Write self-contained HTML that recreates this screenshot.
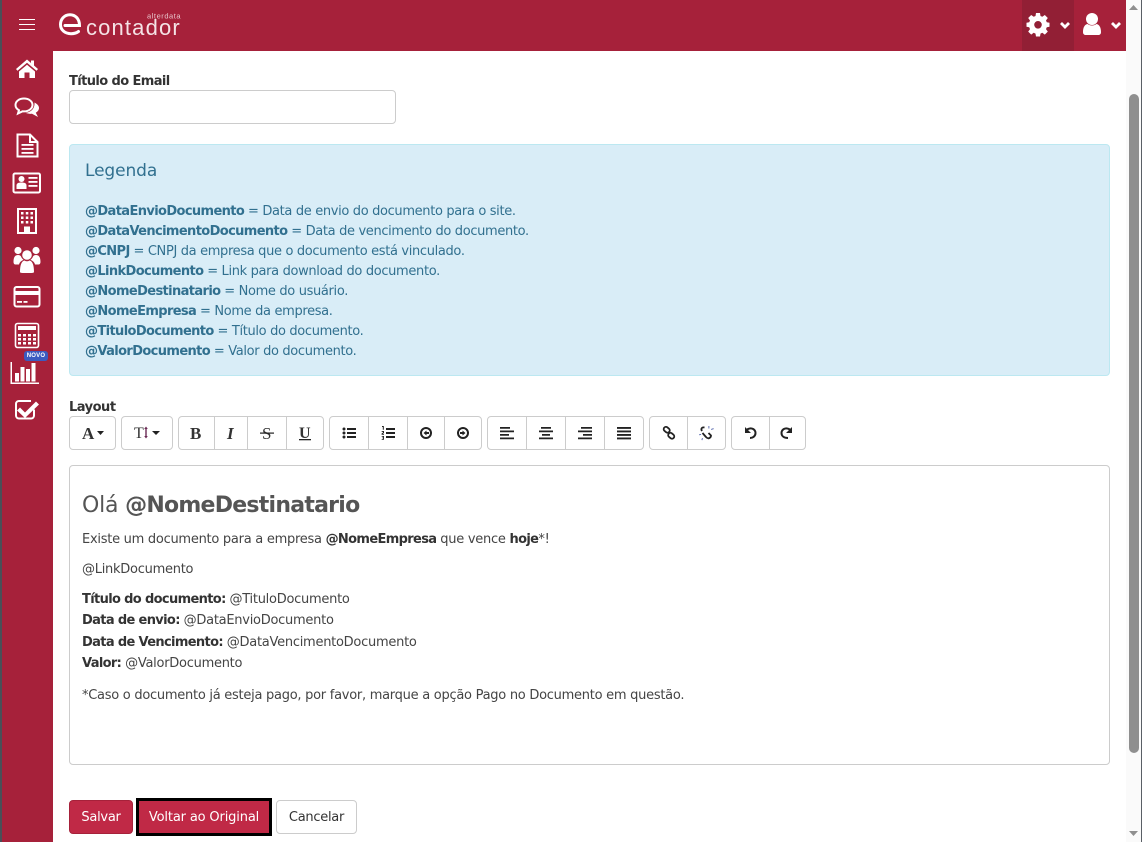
<!DOCTYPE html>
<html lang="pt-BR"><head><meta charset="utf-8"><title>Contador</title>
<style>
html,body{margin:0;padding:0;width:1142px;height:842px;overflow:hidden;background:#fff}
body{position:relative;font-family:"DejaVu Sans","Liberation Sans",sans-serif;font-size:13px;color:#333;letter-spacing:-.27px}
.a{position:absolute;white-space:nowrap}
.box{position:absolute;box-sizing:border-box}
.l{position:absolute;left:85px;white-space:nowrap;color:#31708f;line-height:20px;font-size:13px;letter-spacing:-.34px}
.e{position:absolute;left:82px;white-space:nowrap;color:#444;line-height:20px;font-size:13px;letter-spacing:-.265px}
.e b{color:#333;letter-spacing:-.65px}
b{font-weight:700;letter-spacing:-.62px}
.g{position:absolute;top:416px;height:34px;box-sizing:border-box;border:1px solid #ccc;border-radius:4px;background:#fff}
.d{position:absolute;top:416px;width:1px;height:34px;background:#ccc}
svg{position:absolute;overflow:visible}
.t{position:absolute;font-family:"Liberation Serif",serif;color:#333;white-space:nowrap;letter-spacing:0}
</style></head><body>

<div class="box" style="left:0;top:0;width:1126px;height:51px;background:#a6213a"></div>
<div class="box" style="left:0;top:51px;width:53px;height:791px;background:#a6213a"></div>
<div class="box" style="left:0;top:0;width:2px;height:842px;background:#4a4f57"></div>
<div class="box" style="left:1022px;top:0;width:52px;height:51px;background:#921f35"></div>

<!-- hamburger -->
<div class="box" style="left:19px;top:19px;width:16px;height:1px;background:#fff"></div>
<div class="box" style="left:19px;top:24px;width:16px;height:1px;background:#fff"></div>
<div class="box" style="left:19px;top:29px;width:16px;height:1px;background:#fff"></div>

<!-- logo -->
<svg style="left:0;top:0" width="200" height="51">
<path d="M65 25.500H79.500C79.500 18.500 75 14.700 70 14.700C64 14.700 60.500 19.500 60.500 24.500C60.500 30 65 33.700 71 33.700C74 33.700 76.500 33 78.500 31.500" fill="none" stroke="#fff" stroke-width="3" stroke-linecap="round"/>
<text x="86" y="35" font-family="Liberation Sans,sans-serif" font-size="22" fill="#f5e3e6" letter-spacing="1.150">contador</text>
<text x="147" y="18.500" font-family="Liberation Sans,sans-serif" font-size="7.500" fill="#e8c3ca" letter-spacing=".55">alterdata</text>
</svg>

<!-- sidebar icons -->
<svg style="left:0;top:0" width="53" height="430" fill="#fff">
<!-- home -->
<path d="M27 59.500L16 69L17.500 70.800L27 62.700L36.500 70.800L38 69L34 65.500V60.500H31V63L27 59.500Z"/>
<path d="M19 71.500L27 64.700L35 71.500V78H29.500V72.500H24.500V78H19Z"/>
<!-- comments -->
<path d="M24 98.500C19.200 98.500 15.500 101.300 15.500 105C15.500 107.200 16.800 109 19 110.200L18 113.500L22.500 111.300C23 111.400 23.500 111.400 24 111.400C28.800 111.400 32.500 108.500 32.500 105C32.500 101.300 28.800 98.500 24 98.500Z" fill="none" stroke="#fff" stroke-width="2"/>
<path d="M34.500 102.500C37.500 104 39 106 39 108C39 110 37.600 111.700 35.800 112.700L38 117L32 113.800C29.500 114 27.500 113.600 25.500 112.800C30 112.500 35 109.500 34.500 102.500Z"/>
<!-- doc -->
<g fill="none" stroke="#fff" stroke-width="2"><path d="M17.500 134.500H30L37.500 142V156.500H17.500Z"/><path d="M30 134.500V142H37.500"/></g>
<rect x="21.500" y="144" width="12" height="1.800"/><rect x="21.500" y="148" width="12" height="1.800"/><rect x="21.500" y="152" width="12" height="1.800"/>
<!-- id card -->
<rect x="13.500" y="173.500" width="26.500" height="19" rx="1.500" fill="none" stroke="#fff" stroke-width="2"/>
<circle cx="21.500" cy="179" r="3"/><path d="M16.500 189V185.500C16.500 183.500 18 182.500 21.500 182.500S26.500 183.500 26.500 185.500V189Z"/>
<rect x="28.500" y="177" width="9" height="1.800"/><rect x="28.500" y="181" width="9" height="1.800"/><rect x="28.500" y="185" width="9" height="1.800"/>
<!-- building -->
<rect x="18" y="209" width="18" height="24" fill="none" stroke="#fff" stroke-width="2"/>
<path d="M21 212h2.500v2.500h-2.500zM25.800 212h2.500v2.500h-2.500zM30.500 212h2.500v2.500h-2.500zM21 216.500h2.500v2.500h-2.500zM25.800 216.500h2.500v2.500h-2.500zM30.500 216.500h2.500v2.500h-2.500zM21 221h2.500v2.500h-2.500zM25.800 221h2.500v2.500h-2.500zM30.500 221h2.500v2.500h-2.500zM24 226.500h6V232h-6z"/>
<!-- users -->
<circle cx="18" cy="250.500" r="3.600"/><circle cx="36" cy="250.500" r="3.600"/><circle cx="27" cy="255" r="4.800"/>
<path d="M13.500 262C13.500 256.500 15.500 255 18 255C19.500 255 20.500 255.500 21 256.500C21.500 258 22.500 259 23.500 259.800C21 261 19.500 262.500 19 264.500H15.500C14.300 264.500 13.500 263.500 13.500 262Z"/>
<path d="M40.500 262C40.500 256.500 38.500 255 36 255C34.500 255 33.500 255.500 33 256.500C32.500 258 31.500 259 30.500 259.800C33 261 34.500 262.500 35 264.500H38.500C39.700 264.500 40.500 263.500 40.500 262Z"/>
<path d="M20 272C20 264 22 261 24.500 260.500C26 261.500 28 261.500 29.500 260.500C32 261 34 264 34 272C34 272.500 33 273 31.500 273H22.500C21 273 20 272.500 20 272Z"/>
<!-- card -->
<rect x="14.500" y="287" width="25" height="19.500" rx="2" fill="none" stroke="#fff" stroke-width="2"/>
<rect x="15" y="291" width="24" height="4"/><rect x="17" y="301" width="5" height="1.800"/><rect x="23.500" y="301" width="4" height="1.800"/>
<!-- calculator -->
<rect x="15.500" y="323.500" width="23" height="24" rx="2" fill="none" stroke="#fff" stroke-width="1.600"/>
<rect x="18" y="326" width="18" height="4"/>
<path d="M18 334h3v2.500h-3zM23 334h3v2.500h-3zM28 334h3v2.500h-3zM33 334h3v2.500h-3zM18 338h3v2.500h-3zM23 338h3v2.500h-3zM28 338h3v2.500h-3zM33 338h3v2.500h-3zM18 342h3v2.500h-3zM23 342h3v2.500h-3zM28 342h3v2.500h-3zM33 342h3v2.500h-3z"/>
<!-- chart -->
<path d="M10.500 362h1.500v20.500H39V384H10.500Z"/>
<rect x="15" y="373" width="4" height="8.500"/><rect x="20.500" y="367" width="4" height="14.500"/><rect x="26" y="369" width="4" height="12.500"/><rect x="31.500" y="363" width="4" height="18.500"/>
<!-- check -->
<path d="M34 409.500V415.500C34 417.500 32.500 418.500 31 418.500H19C17.500 418.500 16 417.500 16 415.500V404C16 402 17.500 401 19 401H31" fill="none" stroke="#fff" stroke-width="2"/>
<path d="M20 407.500L25 412.500L36 401.500L39 404.500L25 418L17 410.500Z"/>
</svg>
<div class="box" style="left:24px;top:351px;width:24px;height:10px;background:#3b5bc0;border-radius:3px"></div>
<div class="a" style="left:24px;top:351px;width:24px;text-align:center;color:#fff;font:700 6px/10px 'Liberation Sans',sans-serif;letter-spacing:.2px">NOVO</div>

<!-- header right icons -->
<svg style="left:0;top:0" width="1126" height="51" fill="#fff">
<path fill-rule="evenodd" d="M1036 13H1040L1040.500 16L1042.300 16.800L1044.800 15L1047.800 18L1046 20.500L1046.800 22.300L1049.500 22.800V26.800L1046.800 27.300L1046 29.100L1047.800 31.600L1044.800 34.600L1042.300 32.800L1040.500 33.600L1040 36.500H1036L1035.500 33.600L1033.700 32.800L1031.200 34.600L1028.200 31.600L1030 29.100L1029.200 27.300L1026.500 26.800V22.800L1029.200 22.300L1030 20.500L1028.200 18L1031.200 15L1033.700 16.800L1035.500 16ZM1038 21A3.800 3.800 0 1 0 1038 28.600A3.800 3.800 0 1 0 1038 21Z"/>
<path d="M1061 23L1065 27L1069 23" fill="none" stroke="#fff" stroke-width="2.800"/>
<circle cx="1092" cy="19" r="6"/>
<path d="M1083 32C1083 27 1085 24.500 1087.500 24C1090 26 1094 26 1096.500 24C1099 24.500 1101 27 1101 32C1101 34 1100 35 1098 35H1086C1084 35 1083 34 1083 32Z"/>
<path d="M1112 23L1116 27L1120 23" fill="none" stroke="#fff" stroke-width="2.800"/>
</svg>

<!-- scrollbar -->
<div class="box" style="left:1126px;top:0;width:15px;height:842px;background:#fafafa"></div>
<div class="box" style="left:1141px;top:0;width:1px;height:842px;background:#5a5f66"></div>
<div class="box" style="left:1129px;top:94px;width:10px;height:659px;background:#8f8f8f;border-radius:5px"></div>
<svg style="left:0;top:0" width="1142" height="842" fill="#8f8f8f"><path d="M1133.500 5L1138 10H1129ZM1129 831H1138L1133.500 836Z"/></svg>

<!-- form -->
<div class="a" style="left:69px;top:72px;line-height:20px;font-weight:700;font-size:13px;color:#333;letter-spacing:-.6px">Título do Email</div>
<div class="box" style="left:69px;top:90px;width:327px;height:34px;border:1px solid #ccc;border-radius:4px;background:#fff"></div>

<div class="box" style="left:69px;top:144px;width:1041px;height:232px;background:#d9edf7;border:1px solid #bce8f1;border-radius:4px"></div>
<div class="a" style="left:85px;top:160px;font-size:17px;line-height:22px;color:#31708f;letter-spacing:-.1px">Legenda</div>
<div class="l" style="top:202px"><b>@DataEnvioDocumento</b> = Data de envio do documento para o site.</div>
<div class="l" style="top:222px"><b>@DataVencimentoDocumento</b> = Data de vencimento do documento.</div>
<div class="l" style="top:242px"><b>@CNPJ</b> = CNPJ da empresa que o documento está vinculado.</div>
<div class="l" style="top:262px"><b>@LinkDocumento</b> = Link para download do documento.</div>
<div class="l" style="top:282px"><b>@NomeDestinatario</b> = Nome do usuário.</div>
<div class="l" style="top:302px"><b>@NomeEmpresa</b> = Nome da empresa.</div>
<div class="l" style="top:322px"><b>@TituloDocumento</b> = Título do documento.</div>
<div class="l" style="top:342px"><b>@ValorDocumento</b> = Valor do documento.</div>

<div class="a" style="left:69px;top:398px;line-height:20px;font-weight:700;font-size:13px;color:#333;letter-spacing:-.5px">Layout</div>

<!-- toolbar -->
<div class="g" style="left:69px;width:47px"></div>
<div class="g" style="left:121px;width:52px"></div>
<div class="g" style="left:178px;width:146px"></div>
<div class="g" style="left:329px;width:153px"></div>
<div class="g" style="left:487px;width:157px"></div>
<div class="g" style="left:649px;width:77px"></div>
<div class="g" style="left:731px;width:75px"></div>
<div class="d" style="left:214px"></div><div class="d" style="left:247px"></div><div class="d" style="left:286px"></div>
<div class="d" style="left:368px"></div><div class="d" style="left:407px"></div><div class="d" style="left:444px"></div>
<div class="d" style="left:526px"></div><div class="d" style="left:565px"></div><div class="d" style="left:604px"></div>
<div class="d" style="left:687px"></div><div class="d" style="left:769px"></div>

<div class="t" style="left:82px;top:424px;font-size:17px;line-height:20px;font-weight:700">A</div>
<div class="t" style="left:134px;top:424px;font-size:16px;line-height:20px">T</div>
<div class="t" style="left:190px;top:424px;font-size:17px;line-height:20px;font-weight:700">B</div>
<div class="t" style="left:227px;top:424px;font-size:17px;line-height:20px;font-weight:700;font-style:italic">I</div>
<div class="t" style="left:262px;top:424px;font-size:17px;line-height:20px">S</div>
<div class="t" style="left:299px;top:424px;font-size:16px;line-height:20px;font-weight:700">U</div>

<svg style="left:0;top:0" width="1142" height="460" fill="#222">
<path d="M97 431H104L100.500 435Z"/>
<path d="M146 426.500L147.800 429H146.700V436H147.800L146 438.500L144.200 436H145.300V429H144.200Z" fill="#6b2a55"/>
<path d="M152 431H160L156 435Z"/>
<rect x="260" y="432.500" width="14" height="1.200"/>
<rect x="299" y="439" width="12" height="1.300"/>
<!-- list -->
<g><circle cx="344" cy="429" r="1.500"/><circle cx="344" cy="433" r="1.500"/><circle cx="344" cy="437" r="1.500"/>
<rect x="347" y="428" width="9" height="2"/><rect x="347" y="432" width="9" height="2"/><rect x="347" y="436" width="9" height="2"/>
<rect x="386" y="428" width="9" height="2"/><rect x="386" y="432" width="9" height="2"/><rect x="386" y="436" width="9" height="2"/></g>
<path d="M382 426h1.800v3.800h-1v-2.800h-.8zM381.700 431h2.300v2l-1.300 1h1.300v.8h-2.400v-1.300l1.400-1v-.6h-1.300zM381.700 436h2.300v3.800h-2.300v-.8h1.400v-.7h-1v-.7h1v-.8h-1.400z"/>
<!-- indent circles -->
<g fill="none" stroke="#222" stroke-width="2"><circle cx="426" cy="433" r="5"/><circle cx="463" cy="433" r="5"/></g>
<path d="M423.500 433L426.500 430.500V432H429V434H426.500V435.500ZM465.500 433L462.500 430.500V432H460V434H462.500V435.500Z"/>
<!-- align -->
<path d="M500 427h10v1.700h-10zM500 430.500h14v1.700h-14zM500 434h9v1.700h-9zM500 437.500h14v1.700h-14z"/>
<path d="M541 427h10v1.700h-10zM539 430.500h14v1.700h-14zM542 434h8v1.700h-8zM539 437.500h14v1.700h-14z"/>
<path d="M581 427h11v1.700h-11zM578 430.500h14v1.700h-14zM583 434h9v1.700h-9zM578 437.500h14v1.700h-14z"/>
<path d="M617 427h14v1.900h-14zM617 430.500h14v1.900h-14zM617 434h14v1.900h-14zM617 437.500h14v1.900h-14z"/>
<!-- link -->
<g fill="none" stroke="#222" stroke-width="1.800"><rect x="663.500" y="427.500" width="6.500" height="4.500" rx="2.200" transform="rotate(40 666.700 429.700)"/><rect x="668" y="433.500" width="6.500" height="4.500" rx="2.200" transform="rotate(40 671.200 435.700)"/>
<path d="M702 431C700.500 428.500 702 427 704.500 427.500M702.500 433L706 437C708 439.500 711 438 711 435.500L708.500 433"/></g>
<path d="M708.500 426l.8 0 0 2.500-.8 0zM711 429l2.500-.7.2.8-2.500.7zM702 438l.8.2-.5 2-.8-.2zM699 434.500l2-.5.2.8-2 .5z" fill="#3b4fa0"/>
<!-- undo redo -->
<g fill="none" stroke="#222" stroke-width="2"><path d="M747 429.500C752 426.500 755.500 430 755.500 433C755.500 436.500 752.500 438 750 438"/><path d="M790 429.500C785 426.500 781.500 430 781.500 433C781.500 436.500 784.500 438 788 438"/></g>
<path d="M745 427V433H751ZM792 427V433H786Z"/>
</svg>

<!-- editor -->
<div class="box" style="left:69px;top:465px;width:1041px;height:300px;border:1px solid #ccc;border-radius:4px;background:#fff"></div>
<div class="a" style="left:82px;top:491px;font-size:22px;line-height:30px;color:#555;letter-spacing:-.2px">Olá <b style="letter-spacing:-.75px">@NomeDestinatario</b></div>
<div class="e" style="top:530px">Existe um documento para a empresa <b>@NomeEmpresa</b> que vence <b>hoje</b>*!</div>
<div class="e" style="top:560px">@LinkDocumento</div>
<div class="e" style="top:590px"><b>Título do documento:</b> @TituloDocumento</div>
<div class="e" style="top:611px"><b>Data de envio:</b> @DataEnvioDocumento</div>
<div class="e" style="top:633px"><b>Data de Vencimento:</b> @DataVencimentoDocumento</div>
<div class="e" style="top:654px"><b>Valor:</b> @ValorDocumento</div>
<div class="e" style="top:686px">*Caso o documento já esteja pago, por favor, marque a opção Pago no Documento em questão.</div>

<!-- buttons -->
<div class="box" style="left:69px;top:800px;width:64px;height:34px;background:#c02946;border:1px solid #a6213a;border-radius:4px;color:#fff;text-align:center;line-height:34px">Salvar</div>
<div class="box" style="left:136px;top:798px;width:136px;height:38px;background:#c02946;border:3px solid #000;color:#fff;text-align:center;line-height:34px;letter-spacing:-.15px">Voltar ao Original</div>
<div class="box" style="left:276px;top:800px;width:81px;height:34px;background:#fff;border:1px solid #ccc;border-radius:4px;color:#333;text-align:center;line-height:34px">Cancelar</div>
</body></html>
